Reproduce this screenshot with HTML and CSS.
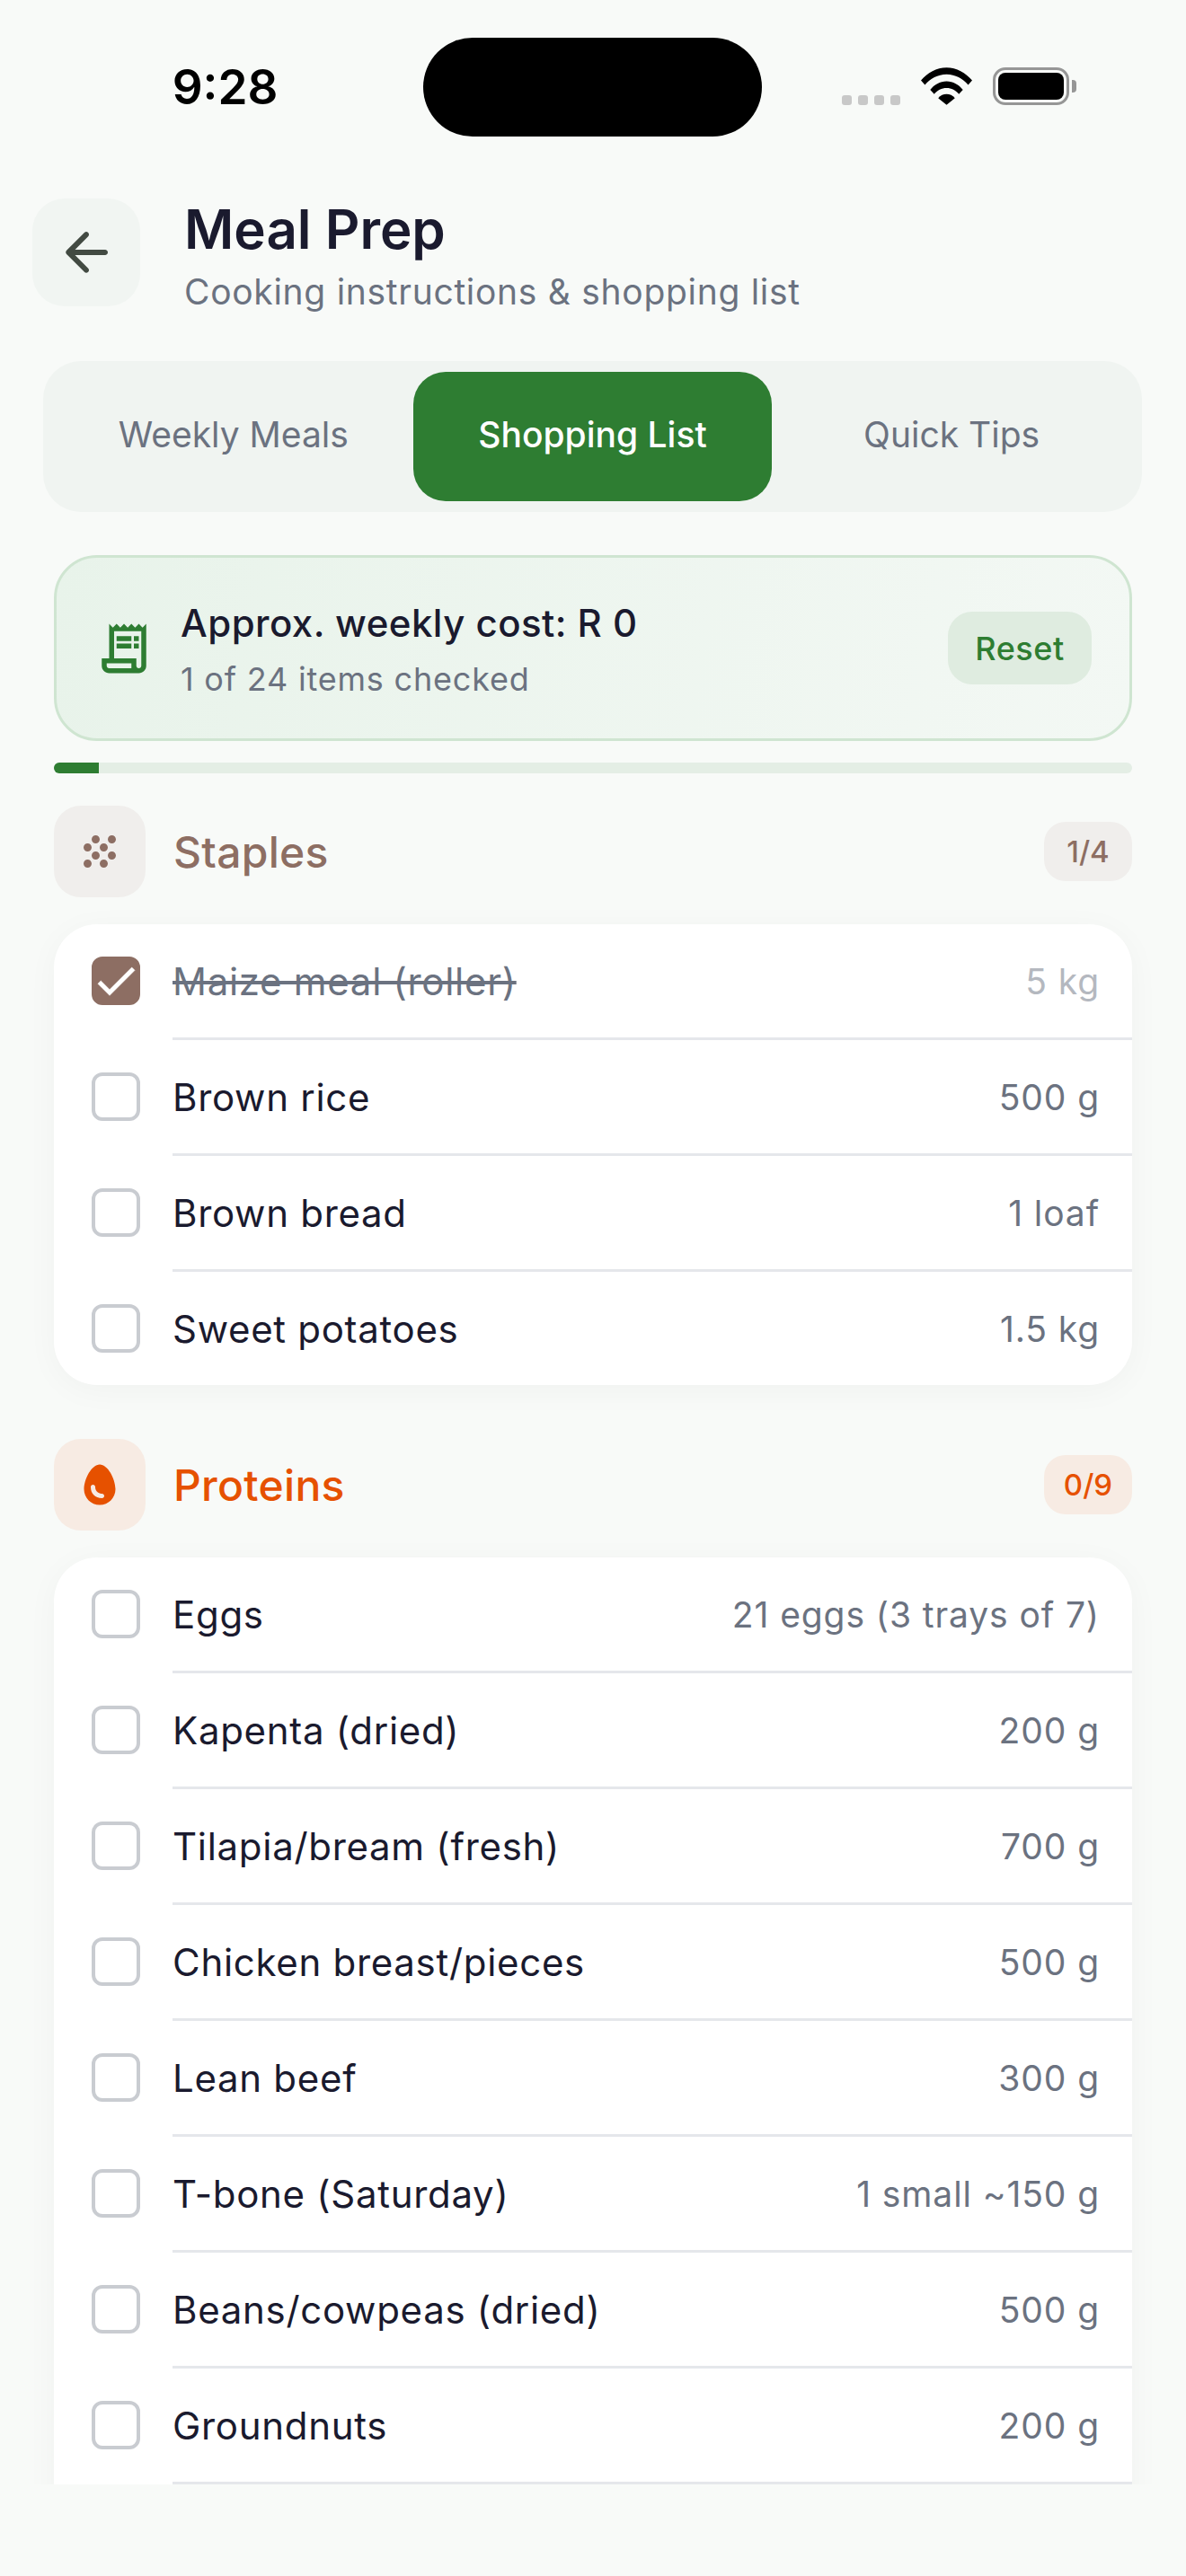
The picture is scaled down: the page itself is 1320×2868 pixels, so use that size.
FILE: index.html
```html
<!DOCTYPE html>
<html lang="en">
<head>
<meta charset="utf-8">
<title>Meal Prep</title>
<link rel="stylesheet" href="styles.css">
</head>
<body>
<div class="app">
  <div class="status">
    <span class="time">9:28</span>
    <div class="island"></div>
    <div class="status-icons">
      <div class="signal"><i></i><i></i><i></i><i></i></div>
      <svg class="wifi" viewBox="0 0 58 42"><path d="M0 14.500C7.500 6 17.500 0 29 0s21.500 6 29 14.500l-4.500 5C47.500 12.500 39 7.500 29 7.500S10.500 12.500 4.500 19.500z"/><path d="M10.500 25C15 19.500 21.500 15.500 29 15.500S43 19.500 47.500 25L43 30c-3.500-4.500-8.500-7-14-7s-10.500 2.500-14 7z"/><path d="M19.500 34.500C22 31.500 25.500 30 29 30s7 1.500 9.500 4.500L29 42z"/></svg>
      <div class="battery"><div class="battery-fill"></div></div>
    </div>
  </div>

  <header class="top">
    <button class="back">
      <svg viewBox="0 0 24 24"><path d="M19 11H7.830l4.880-4.880c.39-.39.39-1.030 0-1.420a.996.996 0 0 0-1.410 0l-6.590 6.590c-.39.39-.39 1.020 0 1.410l6.590 6.590c.39.39 1.020.39 1.410 0 .39-.39.39-1.020 0-1.410L7.830 13H19c.55 0 1-.45 1-1s-.45-1-1-1z"/></svg>
    </button>
    <div>
      <h1 class="title">Meal Prep</h1>
      <p class="subtitle">Cooking instructions &amp; shopping list</p>
    </div>
  </header>

  <nav class="tabs">
    <div class="tab">Weekly Meals</div>
    <div class="tab tab-active">Shopping List</div>
    <div class="tab">Quick Tips</div>
  </nav>

  <main class="scroll">
    <section class="cost">
      <svg class="cost-icon" viewBox="0 0 24 24"><path d="M19.500 3.500 18 2l-1.500 1.500L15 2l-1.500 1.500L12 2l-1.500 1.500L9 2 7.500 3.500 6 2v14H3v3c0 1.660 1.340 3 3 3h12c1.660 0 3-1.340 3-3V2l-1.500 1.500zM15 20H6c-.55 0-1-.45-1-1v-1h10v2zm4-1c0 .55-.45 1-1 1s-1-.45-1-1v-3H8V5h11v14z"/><path d="M9 7h6v2H9zM16 7h2v2h-2zM9 10h6v2H9zM16 10h2v2h-2z"/></svg>
      <div class="cost-text">
        <div class="cost-title">Approx. weekly cost: R 0</div>
        <div class="cost-sub">1 of 24 items checked</div>
      </div>
      <button class="reset">Reset</button>
    </section>
    <div class="progress"><div class="progress-fill" style="width:4.17%"></div></div>

    <div class="cat cat-staples">
      <div class="cat-icon"><svg viewBox="0 0 24 24"><path d="M10 12c-1.100 0-2 .9-2 2s.9 2 2 2 2-.9 2-2-.9-2-2-2zM6 8c-1.100 0-2 .9-2 2s.9 2 2 2 2-.9 2-2-.9-2-2-2zm0 8c-1.100 0-2 .9-2 2s.9 2 2 2 2-.9 2-2-.9-2-2-2zm12-8c1.100 0 2-.9 2-2s-.9-2-2-2-2 .9-2 2 .9 2 2 2zm-4 8c-1.100 0-2 .9-2 2s.9 2 2 2 2-.9 2-2-.9-2-2-2zm4-4c-1.100 0-2 .9-2 2s.9 2 2 2 2-.9 2-2-.9-2-2-2zm-4-4c-1.100 0-2 .9-2 2s.9 2 2 2 2-.9 2-2-.9-2-2-2zm-4-4c-1.100 0-2 .9-2 2s.9 2 2 2 2-.9 2-2-.9-2-2-2z"/></svg></div>
      <h2 class="cat-name">Staples</h2>
      <span class="cat-count">1/4</span>
    </div>
    <ul class="list">
      <li class="row row-done"><span class="box box-on"><svg viewBox="0 0 24 24"><path d="M9 16.170 4.830 12l-1.420 1.410L9 19 21 7l-1.410-1.410z"/></svg></span><div class="row-body"><span class="name">Maize meal (roller)</span><span class="qty">5 kg</span></div></li>
      <li class="row"><span class="box"></span><div class="row-body"><span class="name">Brown rice</span><span class="qty">500 g</span></div></li>
      <li class="row"><span class="box"></span><div class="row-body"><span class="name">Brown bread</span><span class="qty">1 loaf</span></div></li>
      <li class="row row-last"><span class="box"></span><div class="row-body"><span class="name">Sweet potatoes</span><span class="qty">1.5 kg</span></div></li>
    </ul>

    <div class="cat cat-proteins">
      <div class="cat-icon"><svg viewBox="0 0 24 24"><path d="M12 3C8.500 3 5 9.330 5 14c0 3.870 3.130 7 7 7s7-3.130 7-7c0-4.670-3.500-11-7-11zm1 15c-3 0-5-1.990-5-5 0-.55.45-1 1-1s1 .45 1 1c0 2.200 1.780 3 3 3 .55 0 1 .45 1 1s-.45 1-1 1z"/></svg></div>
      <h2 class="cat-name">Proteins</h2>
      <span class="cat-count">0/9</span>
    </div>
    <ul class="list list-more">
      <li class="row"><span class="box"></span><div class="row-body"><span class="name">Eggs</span><span class="qty">21 eggs (3 trays of 7)</span></div></li>
      <li class="row"><span class="box"></span><div class="row-body"><span class="name">Kapenta (dried)</span><span class="qty">200 g</span></div></li>
      <li class="row"><span class="box"></span><div class="row-body"><span class="name">Tilapia/bream (fresh)</span><span class="qty">700 g</span></div></li>
      <li class="row"><span class="box"></span><div class="row-body"><span class="name">Chicken breast/pieces</span><span class="qty">500 g</span></div></li>
      <li class="row"><span class="box"></span><div class="row-body"><span class="name">Lean beef</span><span class="qty">300 g</span></div></li>
      <li class="row"><span class="box"></span><div class="row-body"><span class="name">T-bone (Saturday)</span><span class="qty">1 small ~150 g</span></div></li>
      <li class="row"><span class="box"></span><div class="row-body"><span class="name">Beans/cowpeas (dried)</span><span class="qty">500 g</span></div></li>
      <li class="row"><span class="box"></span><div class="row-body"><span class="name">Groundnuts</span><span class="qty">200 g</span></div></li>
    </ul>
  </main>
</div>
</body>
</html>
```
FILE: styles.css
```css
* { box-sizing: border-box; }

html, body { margin: 0; padding: 0; }

body {
  width: 1320px;
  height: 2868px;
  overflow: hidden;
  background: #f8faf8;
  font-family: Inter, "Liberation Sans", sans-serif;
  font-variation-settings: "opsz" 14;
  color: #1a1a2e;
}

.app {
  height: 2868px;
  display: flex;
  flex-direction: column;
  padding-bottom: 102px;
}

/* Device status bar */
.status {
  height: 194px;
  flex: none;
  padding-top: 42px;
  display: grid;
  grid-template-columns: 471px 377px 1fr;
  align-items: start;
}

.time {
  height: 110px;
  display: flex;
  align-items: center;
  justify-content: center;
  padding-left: 30px;
  font-size: 53px;
  font-weight: 600;
  color: #000;
}

.island {
  width: 377px;
  height: 110px;
  border-radius: 55px;
  background: #000;
}

.status-icons {
  height: 75px;
  display: flex;
  align-items: flex-end;
  padding-left: 89px;
  gap: 23px;
}

.signal { display: flex; gap: 7px; }

.signal i {
  width: 11px;
  height: 11px;
  border-radius: 3px;
  background: #c8c8c8;
}

.wifi { width: 57px; height: 42px; fill: #000; }

.battery {
  position: relative;
  width: 85px;
  height: 42px;
  padding: 3px;
  border: 3.500px solid #969696;
  border-radius: 14px;
}

.battery::after {
  content: "";
  position: absolute;
  top: 10.500px;
  right: -11px;
  width: 5px;
  height: 14px;
  border-radius: 0 4px 4px 0;
  background: #969696;
}

.battery-fill { height: 100%; border-radius: 8px; background: #000; }

/* Screen header */
.top {
  flex: none;
  height: 147px;
  display: flex;
  align-items: flex-start;
  gap: 49px;
  padding: 27px 36px 0;
}

.back {
  width: 120px;
  height: 120px;
  flex: none;
  display: flex;
  align-items: center;
  justify-content: center;
  padding: 0;
  border: 0;
  border-radius: 36px;
  background: #f1f5f2;
}

.back svg { width: 72px; height: 72px; fill: #424a42; }

.title {
  margin: 0;
  font-size: 60px;
  line-height: 68px;
  font-weight: 560;
  font-variation-settings: "opsz" 20;
  color: #1a1a2e;
}

.subtitle {
  margin: 12px 0 0;
  font-size: 39px;
  line-height: 48px;
  font-weight: 370;
  letter-spacing: 0.7px;
  color: #6b7280;
}

/* Section tabs */
.tabs {
  flex: none;
  margin: 61px 49px 0 48px;
  padding: 12px;
  display: grid;
  grid-template-columns: repeat(3, 1fr);
  border-radius: 42px;
  background: #f0f4f1;
}

.tab {
  height: 144px;
  display: flex;
  align-items: center;
  justify-content: center;
  padding-bottom: 6px;
  border-radius: 36px;
  font-size: 39px;
  font-weight: 370;
  color: #6b7280;
}

.tab-active { background: #2e7d32; color: #fff; font-weight: 500; }

/* Scrolling content */
.scroll {
  flex: 1;
  min-height: 0;
  overflow: hidden;
  padding: 48px 60px 0;
}

.cost {
  height: 207px;
  display: flex;
  align-items: center;
  padding: 0 42px;
  border: 3px solid #cfe5d1;
  border-radius: 48px;
  background: linear-gradient(100deg, #e8f3ea, #f3f8f4);
}

.cost-icon { width: 66px; height: 66px; fill: #2e7d32; flex: none; }

.cost-text { flex: 1; margin-left: 30px; }

.cost-title { font-size: 42px; line-height: 56px; font-weight: 500; letter-spacing: 0.45px; color: #1a1a2e; }

.cost-sub { margin-top: 12px; font-size: 36px; line-height: 44px; font-weight: 370; letter-spacing: 0.8px; color: #6b7280; }

.reset {
  width: 160px;
  height: 81px;
  padding: 0;
  border: 0;
  border-radius: 27px;
  background: #dfece0;
  font-family: inherit;
  font-size: 36px;
  font-weight: 500;
  letter-spacing: 0.5px;
  font-variation-settings: inherit;
  color: #2e7d32;
}

.progress {
  height: 12px;
  margin-top: 24px;
  border-radius: 6px;
  overflow: hidden;
  background: #e4eee5;
}

.progress-fill { height: 100%; background: #2e7d32; }

/* Category headings */
.cat {
  height: 102px;
  display: flex;
  align-items: center;
  margin-top: 36px;
}

.cat-icon {
  width: 102px;
  height: 102px;
  flex: none;
  display: flex;
  align-items: center;
  justify-content: center;
  border-radius: 30px;
}

.cat-icon svg { width: 60px; height: 60px; fill: currentColor; }

.cat-staples .cat-icon svg { width: 54px; height: 54px; }

.cat-name { flex: 1; margin: 0 0 0 31px; font-size: 48px; font-weight: 500; letter-spacing: 0.3px; }

.cat-count {
  width: 98px;
  height: 66px;
  display: flex;
  align-items: center;
  justify-content: center;
  border-radius: 24px;
  font-size: 33px;
  font-weight: 500;
}

.cat-staples { color: #8d6e63; }
.cat-staples .cat-icon, .cat-staples .cat-count { background: #f0eeec; }

.cat-proteins { color: #e65100; margin-top: 60px; }
.cat-proteins .cat-icon, .cat-proteins .cat-count { background: #f7ebe3; }

/* Item lists */
.list {
  margin: 30px 0 0;
  padding: 0;
  list-style: none;
  border-radius: 48px;
  background: #fff;
  box-shadow: 0 6px 36px rgba(0, 0, 0, 0.035);
  overflow: hidden;
}

/* The list runs on past the bottom of the scroll area */
.list-more { padding-bottom: 120px; }

.row {
  height: 129px;
  display: flex;
  align-items: center;
  padding-left: 42px;
}

.row-last { height: 126px; }

.box {
  width: 54px;
  height: 54px;
  flex: none;
  border: 4.500px solid #c9ccd1;
  border-radius: 12px;
  margin: 0 36px 3px 0;
}

.row-last .box { margin-bottom: 0; }

.box-on {
  border-color: #8d6e63;
  background: #8d6e63;
  display: flex;
  align-items: center;
  justify-content: center;
}

.box-on svg { width: 56px; height: 56px; flex: none; fill: #fff; stroke: #fff; stroke-width: 0.25; }

.row-body {
  flex: 1;
  height: 100%;
  display: flex;
  align-items: center;
  justify-content: space-between;
  padding-right: 36px;
  border-bottom: 3px solid #e5e7eb;
}

.row-last .row-body { border-bottom: 0; }

.name { font-size: 42px; font-weight: 370; letter-spacing: 0.7px; color: #1a1a2e; }

.qty { font-size: 39px; font-weight: 370; letter-spacing: 0.9px; color: #6b7280; }

.row-done .name { color: #6b7280; text-decoration: line-through; }

.row-done .qty { color: #b4b8bf; }
```
